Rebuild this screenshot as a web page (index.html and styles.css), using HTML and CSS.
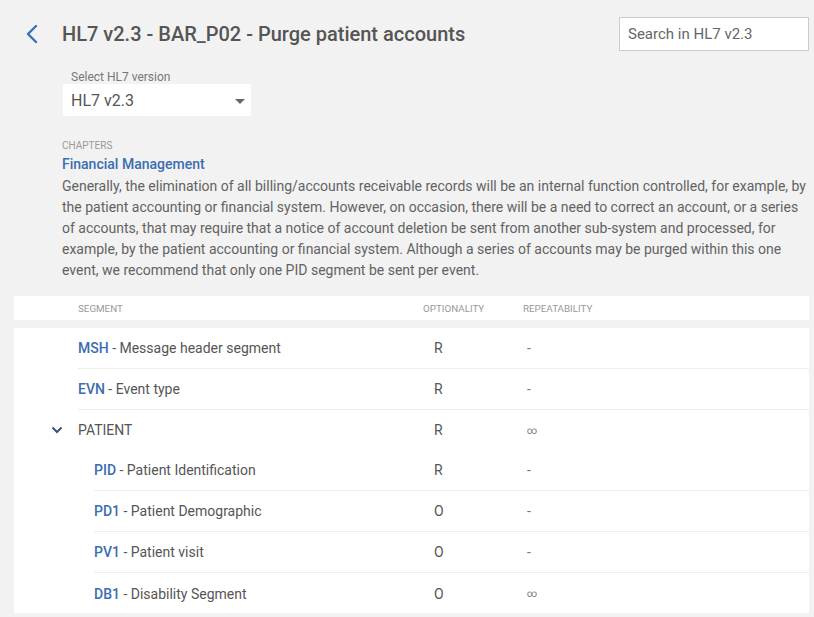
FILE: index.html
```html
<!DOCTYPE html>
<html>
<head>
<meta charset="utf-8">
<link rel="stylesheet" href="styles.css">
</head>
<body>
<div class="page">
  <header class="top">
    <a class="back" href="#" aria-label="Back">
      <svg width="14" height="20" viewBox="0 0 14 20"><path d="M11 2 L3 10 L11 18" fill="none" stroke="#3b70b8" stroke-width="2.4" stroke-linecap="round" stroke-linejoin="round"/></svg>
    </a>
    <h1 class="title">HL7 v2.3 - BAR_P02 - Purge patient accounts</h1>
    <div class="search">Search in HL7 v2.3</div>
  </header>

  <div class="version">
    <div class="version-label">Select HL7 version</div>
    <div class="select">
      <span>HL7 v2.3</span>
      <svg class="caret" width="10" height="5" viewBox="0 0 10 5"><path d="M0 0 H10 L5 5 Z" fill="#666"/></svg>
    </div>
  </div>

  <section class="chapter">
    <div class="chapter-label">CHAPTERS</div>
    <div class="chapter-name">Financial Management</div>
    <p class="chapter-text">Generally, the elimination of all billing/accounts receivable records will be an internal function controlled, for example, by the patient accounting or financial system. However, on occasion, there will be a need to correct an account, or a series of accounts, that may require that a notice of account deletion be sent from another sub-system and processed, for example, by the patient accounting or financial system. Although a series of accounts may be purged within this one event, we recommend that only one PID segment be sent per event.</p>
  </section>

  <div class="thead">
    <div class="th th-seg">SEGMENT</div>
    <div class="th th-opt">OPTIONALITY</div>
    <div class="th">REPEATABILITY</div>
  </div>

  <div class="tbody">
    <div class="row">
      <div class="cell name"><b>MSH</b> - Message header segment</div>
      <div class="cell opt">R</div>
      <div class="cell rep">-</div>
    </div>
    <div class="row">
      <div class="cell name"><b>EVN</b> - Event type</div>
      <div class="cell opt">R</div>
      <div class="cell rep">-</div>
    </div>
    <div class="row group">
      <svg class="toggle" width="12" height="8" viewBox="0 0 12 8"><path d="M1.5 1.5 L6 6 L10.5 1.5" fill="none" stroke="#3d5378" stroke-width="2"/></svg>
      <div class="cell name">PATIENT</div>
      <div class="cell opt">R</div>
      <div class="cell rep inf">∞</div>
    </div>
    <div class="row nested">
      <div class="cell name"><b>PID</b> - Patient Identification</div>
      <div class="cell opt">R</div>
      <div class="cell rep">-</div>
    </div>
    <div class="row nested">
      <div class="cell name"><b>PD1</b> - Patient Demographic</div>
      <div class="cell opt">O</div>
      <div class="cell rep">-</div>
    </div>
    <div class="row nested">
      <div class="cell name"><b>PV1</b> - Patient visit</div>
      <div class="cell opt">O</div>
      <div class="cell rep">-</div>
    </div>
    <div class="row nested last">
      <div class="cell name"><b>DB1</b> - Disability Segment</div>
      <div class="cell opt">O</div>
      <div class="cell rep inf">∞</div>
    </div>
  </div>
</div>
</body>
</html>
```

FILE: styles.css
```css
* { box-sizing: border-box; }
html, body { margin: 0; padding: 0; }
body {
  background: #f2f2f2;
  font-family: Roboto, "Liberation Sans", sans-serif;
  color: #555;
  width: 814px;
  height: 617px;
  overflow: hidden;
}
.page { padding-top: 17px; }

.top {
  display: flex;
  align-items: flex-start;
  height: 34px;
}
.back {
  display: flex;
  width: 14px;
  height: 20px;
  margin: 7px 0 0 25px;
}
.title {
  margin: 3px 0 0 23px;
  font-size: 20px;
  font-weight: 500;
  line-height: 28px;
  color: #555;
  flex: 1;
}
.search {
  width: 190px;
  height: 34px;
  margin-right: 5px;
  background: #fff;
  border: 1px solid #ccc;
  padding: 0 8px;
  font-size: 15px;
  line-height: 32px;
  color: #666;
}

.version {
  margin: 19px 0 0 63px;
}
.version-label {
  font-size: 12px;
  line-height: 14px;
  color: #777;
  padding-left: 8px;
}
.select {
  width: 188px;
  height: 32px;
  background: #fff;
  display: flex;
  align-items: center;
  justify-content: space-between;
  padding: 0 6px 0 8px;
  font-size: 16px;
  color: #555;
}
.caret { margin-top: 2px; }

.chapter {
  margin: 24px 4px 0 62px;
}
.chapter-label {
  font-size: 10px;
  line-height: 12px;
  color: #999;
}
.chapter-name {
  margin-top: 3px;
  font-size: 14px;
  font-weight: 500;
  line-height: 18px;
  color: #3b6db0;
}
.chapter-text {
  margin: 3px 0 0 0;
  font-size: 14px;
  line-height: 21px;
  color: #626262;
}

.thead {
  margin: 15px 5px 0 14px;
  height: 24px;
  background: #fff;
  display: flex;
  align-items: center;
  font-size: 9.8px;
  color: #999;
}
.th-seg { margin-left: 64px; width: 345px; }
.th-opt { width: 100px; }

.tbody {
  margin: 8px 5px 0 14px;
  background: #fff;
  height: 285px;
}
.row {
  display: flex;
  align-items: center;
  height: 41px;
  margin-left: 64px;
  border-bottom: 1px solid #eee;
  font-size: 14px;
  position: relative;
}
.row.group { border-bottom: none; height: 40px; }
.row.nested { margin-left: 80px; }
.row.last { border-bottom: none; }
.cell.name { width: 356px; color: #555; }
.row.nested .cell.name { width: 340px; }
.cell b { font-weight: 500; color: #3b6db0; }
.cell.opt { width: 93px; color: #555; }
.cell.rep { color: #777; }
.cell.rep.inf { font-size: 10px; }
.toggle {
  position: absolute;
  left: -27px;
  top: 16px;
}
```
